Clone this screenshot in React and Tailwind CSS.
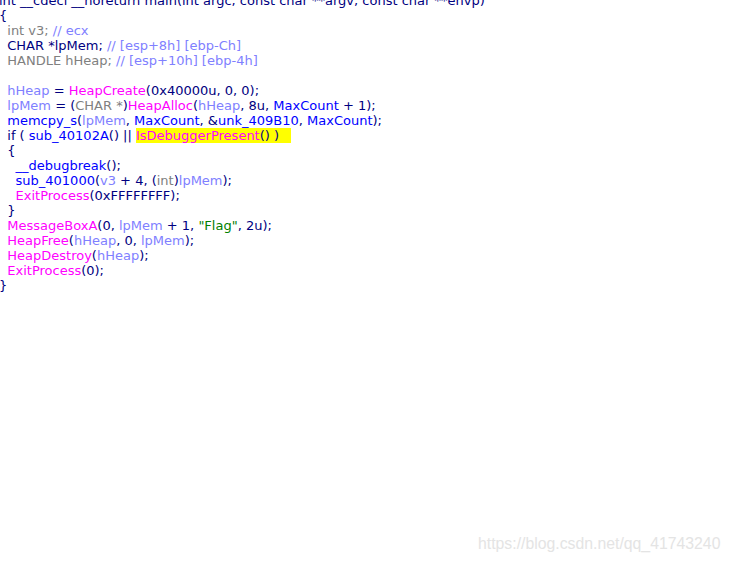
const N = ({ children }) => <span className="text-[#000080]">{children}</span>;
const B = ({ children }) => <span className="text-[#0000ff]">{children}</span>;
const V = ({ children }) => <span className="text-[#8080ff]">{children}</span>;
const F = ({ children }) => <span className="text-[#ff00ff]">{children}</span>;
const G = ({ children }) => <span className="text-[#808080]">{children}</span>;
const C = ({ children }) => <span className="text-[#8080ff]">{children}</span>;
const S = ({ children }) => <span className="text-[#008000]">{children}</span>;

const lines = [
  <N>int __cdecl __noreturn main(int argc, const char **argv, const char **envp)</N>,
  <N>{"{"}</N>,
  <>
    <G>{"  int v3; "}</G>
    <C>// ecx</C>
  </>,
  <>
    <N>{"  CHAR *lpMem; "}</N>
    <C>// [esp+8h] [ebp-Ch]</C>
  </>,
  <>
    <G>{"  HANDLE hHeap; "}</G>
    <C>// [esp+10h] [ebp-4h]</C>
  </>,
  <>{" "}</>,
  <>
    <V>{"  hHeap"}</V>
    <N>{" = "}</N>
    <F>HeapCreate</F>
    <N>(0x40000u, 0, 0);</N>
  </>,
  <>
    <V>{"  lpMem"}</V>
    <N>{" = ("}</N>
    <G>CHAR *</G>
    <N>)</N>
    <F>HeapAlloc</F>
    <N>(</N>
    <V>hHeap</V>
    <N>, 8u, </N>
    <B>MaxCount</B>
    <N>{" + 1);"}</N>
  </>,
  <>
    <B>{"  memcpy_s"}</B>
    <N>(</N>
    <V>lpMem</V>
    <N>, </N>
    <B>MaxCount</B>
    <N>, &amp;</N>
    <B>unk_409B10</B>
    <N>, </N>
    <B>MaxCount</B>
    <N>);</N>
  </>,
  <>
    <N>{"  if ( "}</N>
    <B>sub_40102A</B>
    <N>{"() || "}</N>
    <span className="bg-[#ffff00]">
      <F>IsDebuggerPresent</F>
      <N>{"() )   "}</N>
    </span>
  </>,
  <N>{"  {"}</N>,
  <>
    <B>{"    __debugbreak"}</B>
    <N>();</N>
  </>,
  <>
    <B>{"    sub_401000"}</B>
    <N>(</N>
    <V>v3</V>
    <N>{" + 4, ("}</N>
    <G>int</G>
    <N>)</N>
    <V>lpMem</V>
    <N>);</N>
  </>,
  <>
    <F>{"    ExitProcess"}</F>
    <N>(0xFFFFFFFF);</N>
  </>,
  <N>{"  }"}</N>,
  <>
    <F>{"  MessageBoxA"}</F>
    <N>(0, </N>
    <V>lpMem</V>
    <N>{" + 1, "}</N>
    <S>"Flag"</S>
    <N>, 2u);</N>
  </>,
  <>
    <F>{"  HeapFree"}</F>
    <N>(</N>
    <V>hHeap</V>
    <N>, 0, </N>
    <V>lpMem</V>
    <N>);</N>
  </>,
  <>
    <F>{"  HeapDestroy"}</F>
    <N>(</N>
    <V>hHeap</V>
    <N>);</N>
  </>,
  <>
    <F>{"  ExitProcess"}</F>
    <N>(0);</N>
  </>,
  <N>{"}"}</N>,
];

export default function App() {
  return (
    <div className="relative w-[730px] h-[562px] overflow-hidden bg-white">
      <div className="-mt-[7px] -ml-[1px] font-['DejaVu_Sans',sans-serif] text-[13px] leading-[15px] whitespace-pre">
        {lines.map((l, i) => (
          <div key={i} className="h-[15px]">
            {l}
          </div>
        ))}
      </div>
      <div className="absolute left-[478px] top-[534px] font-['Liberation_Sans',Arial,sans-serif] text-[15.8px] leading-[20px] text-[#e4e4e4]">
        https://blog.csdn.net/qq_41743240
      </div>
    </div>
  );
}
